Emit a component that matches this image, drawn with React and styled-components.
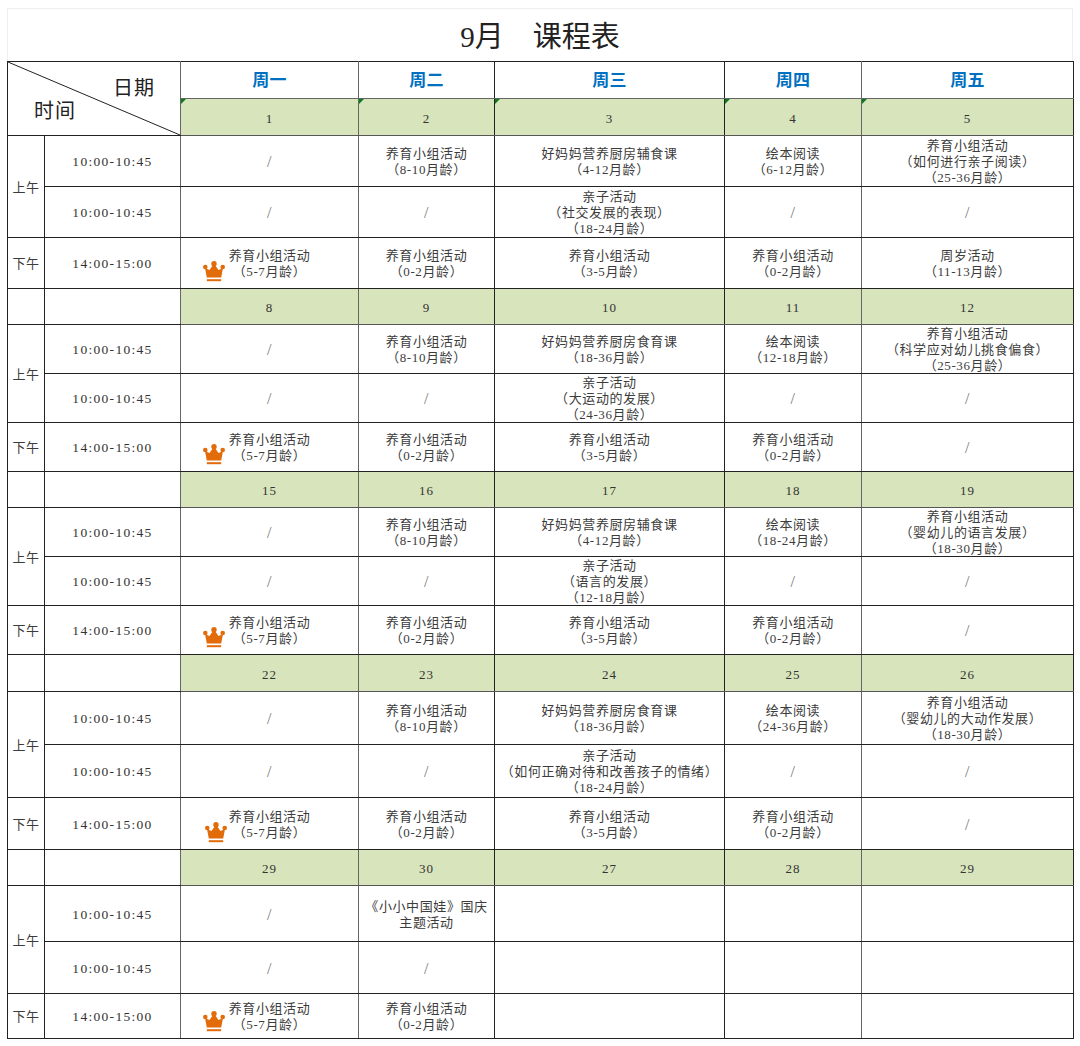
import React from 'react'
import styled, { createGlobalStyle } from 'styled-components'

const Global = createGlobalStyle`
    html, body {
        margin: 0;
        background: #fff;
    }
    body {
        font-family: "Liberation Serif", "Noto Sans CJK SC", serif;
        color: #3c3c3c;
    }
`

const Page = styled.div`
    width: 1066px;
    padding: 8px 0 0 7px;
`

const Title = styled.h1`
    margin: 0;
    height: 53px;
    line-height: 57px;
    box-sizing: border-box;
    border: 1px solid #eee;
    border-bottom: 0;
    text-align: center;
    font-size: 29px;
    font-weight: 400;
    color: #222;
    white-space: pre;
`

const Table = styled.table`
    width: 1066px;
    table-layout: fixed;
    border-collapse: collapse;
    font-size: 13px;
    letter-spacing: .6px;
    line-height: 16px;
    text-spacing-trim: space-all;
`

const Row = styled.tr`
    height: ${p => p.$h}px;
`

const Cell = styled.td`
    position: relative;
    padding: 0;
    text-align: center;
    vertical-align: middle;
    overflow: visible;
    white-space: pre-line;
    border: 1px solid #222;
    border-left-color: ${p => p.$soft ? '#666' : '#222'};
    border-right-color: ${p => p.$softRight ? '#666' : '#222'};
`

// nudges the glyphs down without changing the row height
const Text = styled.span`
    display: block;
    margin: 1px 0 -1px;
`

const Slash = styled(Text)`
    font-size: 16px;
    color: #777;
`

const Time = styled(Text)`
    font-size: 13.5px;
    letter-spacing: 1.3px;
    color: #333;
`

const Day = styled(Text)`
    margin: 1.5px 0 -1.5px;
    letter-spacing: 1px;
    color: #333;
`

const WeekDay = styled(Cell)`
    color: #0070c0;
    font-size: 17px;
    font-weight: 700;
    letter-spacing: .2px;
    border-bottom-color: #666;
`

const DateCell = styled(Cell)`
    background: #d8e4bc;
    border-bottom-color: #555;

    ${p => p.$flag && `
        &::before {
            content: '';
            position: absolute;
            left: 0;
            top: 0;
            border-top: 5px solid #0b7a1e;
            border-right: 5px solid transparent;
        }
    `}
`

const Corner = styled(Cell)`
    color: #222;
    font-size: 20px;
    letter-spacing: 1px;
    line-height: 23px;
`

const CornerInner = styled.div`
    display: flex;
    flex-direction: column;
    padding: 3px 25px 0 26px;
`

const CornerTop = styled.span`
    align-self: flex-end;
`

const CornerBottom = styled.span`
    align-self: flex-start;
`

const Diagonal = styled.svg`
    position: absolute;
    inset: 0;
    width: 100%;
    height: 100%;
`

const Crown = styled.svg`
    position: absolute;
    left: ${p => p.$x}px;
    bottom: ${p => p.$y}px;
    width: 22px;
    height: 21px;
`

const CrownIcon = ({ x = 22, y = 6 }) => (
    <Crown $x={x} $y={y} viewBox="0 0 22 21">
        <g fill="#e36c0a">
            <circle cx="11" cy="2.8" r="2.7" />
            <circle cx="2.3" cy="6" r="2.3" />
            <circle cx="19.7" cy="6" r="2.3" />
            <path d="M2 7 L6.5 9 L10 4 H12 L15.5 9 L20 7 L18.2 16.6 H3.8 Z" />
            <rect x="3.8" y="18.2" width="14.4" height="2" />
        </g>
    </Crown>
)

const act = (age) => `养育小组活动\n（${age}月龄）`

const weeks = [
    {
        h: [37, 51, 51, 51],
        dates: ['1', '2', '3', '4', '5'],
        am1: ['/', act('8-10'), '好妈妈营养厨房辅食课\n（4-12月龄）', '绘本阅读\n（6-12月龄）', '养育小组活动\n（如何进行亲子阅读）\n（25-36月龄）'],
        am2: ['/', '/', '亲子活动\n（社交发展的表现）\n（18-24月龄）', '/', '/'],
        pm: [act('5-7'), act('0-2'), act('3-5'), act('0-2'), '周岁活动\n（11-13月龄）'],
    },
    {
        h: [36, 49, 49, 49],
        dates: ['8', '9', '10', '11', '12'],
        am1: ['/', act('8-10'), '好妈妈营养厨房食育课\n（18-36月龄）', '绘本阅读\n（12-18月龄）', '养育小组活动\n（科学应对幼儿挑食偏食）\n（25-36月龄）'],
        am2: ['/', '/', '亲子活动\n（大运动的发展）\n（24-36月龄）', '/', '/'],
        pm: [act('5-7'), act('0-2'), act('3-5'), act('0-2'), '/'],
    },
    {
        h: [36, 49, 49, 49],
        dates: ['15', '16', '17', '18', '19'],
        am1: ['/', act('8-10'), '好妈妈营养厨房辅食课\n（4-12月龄）', '绘本阅读\n（18-24月龄）', '养育小组活动\n（婴幼儿的语言发展）\n（18-30月龄）'],
        am2: ['/', '/', '亲子活动\n（语言的发展）\n（12-18月龄）', '/', '/'],
        pm: [act('5-7'), act('0-2'), act('3-5'), act('0-2'), '/'],
    },
    {
        h: [37, 53, 53, 52],
        crownX: 24,
        dates: ['22', '23', '24', '25', '26'],
        am1: ['/', act('8-10'), '好妈妈营养厨房食育课\n（18-36月龄）', '绘本阅读\n（24-36月龄）', '养育小组活动\n（婴幼儿的大动作发展）\n（18-30月龄）'],
        am2: ['/', '/', '亲子活动\n（如何正确对待和改善孩子的情绪）\n（18-24月龄）', '/', '/'],
        pm: [act('5-7'), act('0-2'), act('3-5'), act('0-2'), '/'],
    },
    {
        h: [36, 56, 52, 45],
        dates: ['29', '30', '27', '28', '29'],
        am1: ['/', '《小小中国娃》国庆\n主题活动', '', '', ''],
        am2: ['/', '/', '', '', ''],
        pm: [act('5-7'), act('0-2'), '', '', ''],
    },
]

const softLeft = [true, true, false, false, true]
const softRight = [true, false, false, true, false]

const Slots = ({ items, crown, crownX }) => items.map((text, i) => (
    <Cell key={i} $soft={softLeft[i]} $softRight={softRight[i]}>
        {text === '/' ? <Slash>/</Slash> : <Text>{text}</Text>}
        {crown && i === 0 && <CrownIcon x={crownX} />}
    </Cell>
))

const TimeCell = ({ children }) => (
    <Cell $softRight>
        <Time>{children}</Time>
    </Cell>
)

const Week = ({ week, first }) => (
    <>
        <Row $h={week.h[0]}>
            {!first && <Cell />}
            {!first && <Cell $softRight />}
            {week.dates.map((d, i) => (
                <DateCell key={i} $flag={first} $soft={softLeft[i]} $softRight={softRight[i]}>
                    <Day>{d}</Day>
                </DateCell>
            ))}
        </Row>
        <Row $h={week.h[1]}>
            <Cell rowSpan={2}><Text>上午</Text></Cell>
            <TimeCell>10:00-10:45</TimeCell>
            <Slots items={week.am1} />
        </Row>
        <Row $h={week.h[2]}>
            <TimeCell>10:00-10:45</TimeCell>
            <Slots items={week.am2} />
        </Row>
        <Row $h={week.h[3]}>
            <Cell><Text>下午</Text></Cell>
            <TimeCell>14:00-15:00</TimeCell>
            <Slots items={week.pm} crown crownX={week.crownX} />
        </Row>
    </>
)

const App = () => (
    <Page>
        <Global />
        <Title>9月　课程表</Title>
        <Table>
            <colgroup>
                <col style={{ width: 37 }} />
                <col style={{ width: 136 }} />
                <col style={{ width: 178 }} />
                <col style={{ width: 136 }} />
                <col style={{ width: 230 }} />
                <col style={{ width: 137 }} />
                <col style={{ width: 212 }} />
            </colgroup>
            <tbody>
                <Row $h={37}>
                    <Corner colSpan={2} rowSpan={2} $softRight>
                        <Diagonal viewBox="0 0 100 100" preserveAspectRatio="none">
                            <line x1="0" y1="0" x2="100" y2="100" stroke="#222" strokeWidth="1" vectorEffect="non-scaling-stroke" />
                        </Diagonal>
                        <CornerInner>
                            <CornerTop>日期</CornerTop>
                            <CornerBottom>时间</CornerBottom>
                        </CornerInner>
                    </Corner>
                    {['周一', '周二', '周三', '周四', '周五'].map((d, i) => (
                        <WeekDay key={d} $soft={softLeft[i]} $softRight={softRight[i]}>
                            <Text>{d}</Text>
                        </WeekDay>
                    ))}
                </Row>
                {weeks.map((week, i) => <Week key={i} week={week} first={i === 0} />)}
            </tbody>
        </Table>
    </Page>
)

export default App
